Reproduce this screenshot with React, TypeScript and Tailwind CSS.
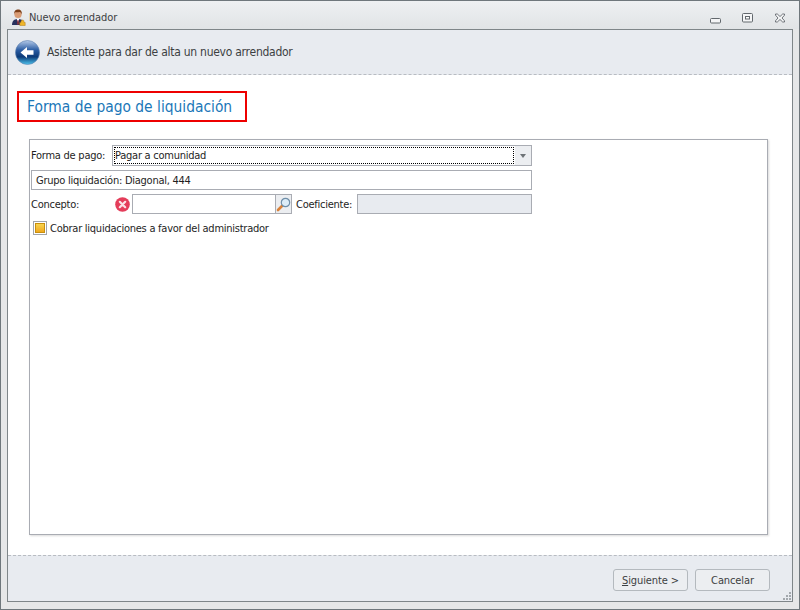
import React from "react";

const ff = { fontFamily: '"DejaVu Sans Condensed", "DejaVu Sans", sans-serif' };

function Person() {
  return (
    <svg width="16" height="18" viewBox="0 0 16 18">
      <path d="M1 17c0-4 2-6 6-6s6 2 6 6z" fill="#27305c" />
      <path d="M5.600 11l1.400 3 1.400-3z" fill="#fff" />
      <path d="M6.600 12h.8l.3 4-.7 1-.7-1z" fill="#b03030" />
      <circle cx="7" cy="6.500" r="3.600" fill="#d99c74" />
      <path d="M3.200 6.500C2.800 2.500 5 1.500 7.200 1.500c2.400 0 4 1.500 3.600 5-.5-1.600-1.200-2.300-2.200-2.500-1.500.5-3.500.4-4.400.2-.6.7-.9 1.500-1 2.300z" fill="#7c3f18" />
      <path d="M10 13.500a1.500 1.500 0 0 1 3 0v1h1.200v3H8.800v-3H10z" fill="#eeb52a" stroke="#b67f10" strokeWidth=".5" />
    </svg>
  );
}

function BackIcon() {
  return (
    <svg width="25" height="25" viewBox="0 0 25 25">
      <defs>
        <linearGradient id="bk" x1="0" y1="0" x2="0" y2="1">
          <stop offset="0" stopColor="#b4c9e8" />
          <stop offset=".4" stopColor="#2a5ca3" />
          <stop offset=".68" stopColor="#0c3a78" />
          <stop offset="1" stopColor="#4cc4ee" />
        </linearGradient>
      </defs>
      <circle cx="12.500" cy="12.500" r="12" fill="url(#bk)" stroke="#5d7fae" strokeWidth=".6" />
      <path d="M5.500 12.500L12 7v3.300h6.500v4.400H12V18z" fill="#fff" />
    </svg>
  );
}

function ErrorIcon() {
  return (
    <svg width="15" height="15" viewBox="0 0 15 15">
      <circle cx="7.500" cy="7.500" r="7.300" fill="#e43d5a" />
      <path d="M4.800 4.800l5.400 5.400M10.200 4.800l-5.400 5.400" stroke="#fbe3e7" strokeWidth="2.200" strokeLinecap="round" />
    </svg>
  );
}

function Magnifier() {
  return (
    <svg width="15" height="15" viewBox="0 0 15 15">
      <path d="M6.500 8.500L2 13" stroke="#d9823a" strokeWidth="2.600" strokeLinecap="round" />
      <circle cx="9.500" cy="5.500" r="4.200" fill="#dcecf7" stroke="#6f8ea8" strokeWidth="1.200" />
    </svg>
  );
}

function Grip() {
  const dots = [[6, 0], [3, 3], [6, 3], [0, 6], [3, 6], [6, 6]];
  return (
    <svg width="8" height="8" viewBox="0 0 8 8">
      {dots.map(([x, y]) => (
        <rect key={`${x}-${y}`} x={x} y={y} width="2" height="2" fill="#a3a8ad" />
      ))}
    </svg>
  );
}

function WinButtons() {
  return (
    <div className="flex items-center gap-[21px] pr-[13px] pt-[6px]">
      <svg width="11" height="6" viewBox="0 0 11 6" className="mt-[5px]">
        <rect x=".5" y=".5" width="10" height="4.500" rx="1" fill="#f4f5f6" stroke="#62686d" />
      </svg>
      <svg width="11" height="10" viewBox="0 0 11 10">
        <rect x=".5" y=".5" width="10" height="8.500" rx="1" fill="#f4f5f6" stroke="#62686d" />
        <rect x="3.500" y="3.500" width="4" height="2.500" fill="#fff" stroke="#62686d" />
      </svg>
      <svg width="12" height="10" viewBox="0 0 12 10">
        <path d="M1.500 1h1.800L6 3.500 8.700 1h1.800v1.200L8 5l2.500 2.800V9H8.700L6 6.500 3.300 9H1.500V7.800L4 5 1.500 2.200z" fill="#f4f5f6" stroke="#62686d" strokeWidth=".9" />
      </svg>
    </div>
  );
}

function Btn({ children }: { children: React.ReactNode }) {
  return (
    <button className="h-[22px] w-[75px] rounded-[3px] border border-[#b4b9be] bg-[#eceef1] pt-[2px] text-[11px] leading-[18px] tracking-[-0.1px] text-[#3c3f42]">
      {children}
    </button>
  );
}

export default function App() {
  return (
    <div
      className="flex h-[610px] w-[800px] flex-col overflow-hidden border border-[#6f777c] bg-[#e6e7e8] text-[11px] tracking-[-0.25px] text-[#1e1e1e]"
      style={ff}
    >
      <div className="flex h-[28px] shrink-0 items-center justify-between bg-gradient-to-b from-[#eef0f2] to-[#e1e4e6]">
        <div className="flex items-center gap-[2px] pl-[10px] pt-[3px]">
          <Person />
          <span className="pt-[3px] text-[11px] tracking-[-0.1px] text-[#3d4043]">Nuevo arrendador</span>
        </div>
        <WinButtons />
      </div>

      <div className="mx-[6px] mb-[7px] flex min-h-0 flex-1 flex-col border border-[#7f8689] bg-white">
        <div className="flex h-[45px] shrink-0 items-center gap-[7px] border-b border-dashed border-[#b8bcc2] bg-[#e8ebf0] pl-[7px]">
          <BackIcon />
          <span className="text-[12px] tracking-[-0.26px] text-[#3c3f42]">Asistente para dar de alta un nuevo arrendador</span>
        </div>

        <div className="flex min-h-0 flex-1 flex-col pl-[9px] pt-[16px]">
          <div className="flex h-[31px] w-[230px] items-center border-2 border-[#ee0000] pl-[8px] pt-[2px] text-[15.4px] tracking-normal text-[#1b77b8]">
            Forma de pago de liquidación
          </div>

          <div className="ml-[12px] mt-[17px] flex h-[396px] w-[739px] flex-col gap-[4px] border border-[#a9acb3] bg-white pl-[1px] pt-[5px] shadow-[1px_1px_2px_rgba(0,0,0,0.15)]">
            <div className="flex h-[21px] items-center">
              <span className="w-[81px] whitespace-nowrap pt-[2px]">Forma de pago:</span>
              <div className="flex h-[21px] w-[420px] border border-[#a9acb3]">
                <div className="m-[1px] flex-1 border border-dotted border-black leading-[15px]">Pagar a comunidad</div>
                <div className="flex w-[16px] items-center justify-center bg-[#eceef1]">
                  <div className="h-0 w-0 border-x-[3.500px] border-t-[4px] border-x-transparent border-t-[#6e7377]" />
                </div>
              </div>
            </div>
            <div className="flex h-[20px] w-[501px] items-center border border-[#a9acb3] pl-[4px] pt-[2px]">
              Grupo liquidación: Diagonal, 444
            </div>
            <div className="flex h-[20px] items-center">
              <span className="w-[84px] pt-[2px]">Concepto:</span>
              <ErrorIcon />
              <div className="ml-[2px] flex h-[20px] w-[160px] border border-[#a9acb3]">
                <div className="flex-1" />
                <div className="flex w-[16px] items-center justify-center border-l border-[#a9acb3] bg-[#eceef1]">
                  <Magnifier />
                </div>
              </div>
              <span className="ml-[4px] w-[61px] whitespace-nowrap pt-[2px]">Coeficiente:</span>
              <div className="h-[20px] w-[175px] border border-[#a9acb3] bg-[#e8ebf0]" />
            </div>
            <div className="mt-[3px] flex h-[14px] items-center gap-[3px] pl-[2px]">
              <div className="flex h-[14px] w-[14px] items-center justify-center border border-[#a1a5aa] bg-white">
                <div className="h-[10px] w-[10px] border border-[#c88f0e] bg-gradient-to-b from-[#f8d44d] to-[#f0a81c]" />
              </div>
              <span className="pt-[2px]">Cobrar liquidaciones a favor del administrador</span>
            </div>
          </div>
        </div>

        <div className="relative flex h-[46px] shrink-0 items-start justify-end gap-[7px] border-t border-dashed border-[#b8bcc2] bg-[#e8ebf0] pr-[22px] pt-[13px]">
          <Btn>
            <span className="underline">S</span>iguiente &gt;
          </Btn>
          <Btn>Cancelar</Btn>
          <div className="absolute bottom-[1px] right-[1px] leading-none">
            <Grip />
          </div>
        </div>
      </div>
    </div>
  );
}
